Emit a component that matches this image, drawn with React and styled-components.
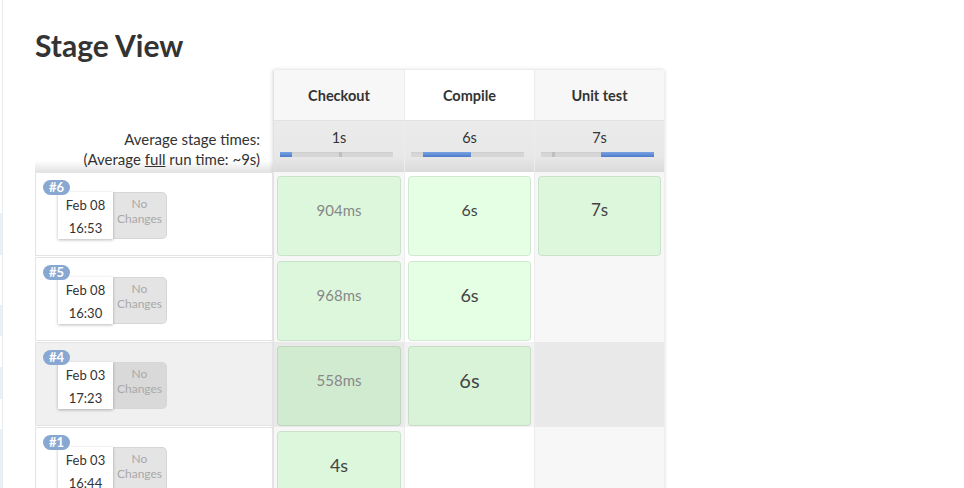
import React from 'react';
import styled, { createGlobalStyle } from 'styled-components';

const GlobalStyle = createGlobalStyle`
  html, body { margin: 0; padding: 0; background: #fff; }
  body { font-family: Lato, "Open Sans", "DejaVu Sans", sans-serif; color: #333; }
  * { box-sizing: border-box; }
`;

const Page = styled.div`
  display: flex;
  height: 488px;
  overflow: hidden;
`;

const Sidebar = styled.div`
  flex: 0 0 3px;
  border-right: 1px solid #e7edf0;
  display: flex;
  flex-direction: column;
`;

const SideBlock = styled.div`
  height: ${p => p.h}px;
  margin-top: ${p => p.mt}px;
  background: #eaf0f3;
`;

const Main = styled.div`
  flex: 1;
  padding-left: 32px;
`;

const Title = styled.h2`
  margin: 27px 0 0;
  font-size: 30px;
  line-height: 36px;
  font-weight: 700;
  color: #333;
`;

const StageView = styled.div`
  display: flex;
  margin-top: 7px;
`;

const LeftCol = styled.div`
  flex: 0 0 238px;
  display: flex;
  flex-direction: column;
`;

const HeaderSpacer = styled.div`
  height: 51px;
`;

const AvgLabel = styled.div`
  height: 51px;
  padding: 8px 13px 0 0;
  text-align: right;
  font-size: 15px;
  line-height: 20px;
  color: #333;
  background: linear-gradient(to bottom, #fff 0%, #fff 78%, #e3e3e3 100%);
`;

const Under = styled.span`
  text-decoration: underline;
`;

const RunCell = styled.div`
  position: relative;
  height: 84px;
  margin-bottom: 1px;
  border: 1px solid #e4e4e4;
  background: ${p => (p.$hover ? '#f0f0f0' : '#fff')};
  padding: 19px 0 0 22px;
  display: flex;
  align-items: flex-start;
`;

const Badge = styled.div`
  position: absolute;
  top: 7px;
  left: 7px;
  z-index: 2;
  width: 27px;
  height: 15px;
  border-radius: 8px;
  background: #88a8d2;
  color: #fff;
  font-size: 13px;
  font-weight: 700;
  line-height: 15px;
  text-align: center;
`;

const DateBox = styled.div`
  width: 55px;
  height: 47px;
  padding-top: 2px;
  background: #fff;
  box-shadow: 0 1px 3px rgba(0, 0, 0, 0.28);
  font-size: 13px;
  line-height: 23px;
  text-align: center;
  color: #333;
  position: relative;
  z-index: 1;
`;

const NoChanges = styled.div`
  width: 54px;
  height: 47px;
  background: ${p => (p.$hover ? '#d9d9d9' : '#e4e4e4')};
  border: 1px solid #d6d6d6;
  border-left: none;
  border-radius: 0 5px 5px 0;
  color: #a9a9a9;
  font-size: 12px;
  line-height: 15px;
  padding-top: 3px;
  text-align: center;
`;

const StagesPanel = styled.div`
  display: flex;
  border-left: 1px solid #e2e2e2;
  box-shadow: 0 0 4px rgba(0, 0, 0, 0.18);
  align-self: flex-start;
`;

const StageColumn = styled.div`
  flex: 0 0 130px;
  display: flex;
  flex-direction: column;
  background: ${p => (p.$alt ? '#f7f7f7' : '#fff')};
  & + & { border-left: 1px solid #ececec; }
`;

const StageHeader = styled.div`
  height: 51px;
  display: flex;
  align-items: center;
  justify-content: center;
  font-size: 14.5px;
  font-weight: 700;
  color: #333;
  border-bottom: 1px solid #e2e2e2;
`;

const AvgCell = styled.div`
  height: 51px;
  padding-top: 7px;
  background: linear-gradient(to bottom, #ebebeb 0%, #e8e8e8 70%, #dadada 100%);
  font-size: 14.5px;
  line-height: 20px;
  text-align: center;
  color: #333;
`;

const Track = styled.div`
  position: relative;
  width: 113px;
  height: 5px;
  margin: 4px 0 0 6px;
  background: #d6d6d6;
  border-top: 1px solid #cfcfcf;
`;

const Fill = styled.div`
  position: absolute;
  top: -1px;
  height: 5px;
  background: linear-gradient(to bottom, #7aa3e3, #4d7ccb);
`;

const Tick = styled.div`
  position: absolute;
  top: -1px;
  width: 3px;
  height: 5px;
  background: #bfbfbf;
`;

const StageCell = styled.div`
  height: 85px;
  padding: 4px 3px 1px 3px;
  background: ${p => (p.$hover ? (p.$alt ? '#e9e9e9' : '#f2f2f2') : 'transparent')};
`;

const SuccessBox = styled.div`
  height: 100%;
  border: 1px solid rgba(0, 0, 0, 0.09);
  border-radius: 4px;
  background: rgba(0, 255, 0, 0.1);
  padding-top: 21px;
  text-align: center;
  line-height: 24px;
  font-size: ${p => p.$size}px;
  color: ${p => (p.$ms ? '#888' : '#444')};
`;

const stages = [
  { name: 'Checkout', avg: '1s', alt: true, fill: [0, 12], tick: 59 },
  { name: 'Compile', avg: '6s', alt: false, fill: [12, 48], tick: null },
  { name: 'Unit test', avg: '7s', alt: true, fill: [60, 53], tick: 11 },
];

const runs = [
  { id: '#6', date: 'Feb 08', time: '16:53', cells: [{ t: '904ms', s: 15, ms: true }, { t: '6s', s: 16 }, { t: '7s', s: 17 }] },
  { id: '#5', date: 'Feb 08', time: '16:30', cells: [{ t: '968ms', s: 15, ms: true }, { t: '6s', s: 18 }, null] },
  { id: '#4', date: 'Feb 03', time: '17:23', hover: true, cells: [{ t: '558ms', s: 15, ms: true }, { t: '6s', s: 20 }, null] },
  { id: '#1', date: 'Feb 03', time: '16:44', cells: [{ t: '4s', s: 18 }, null, null] },
];

export default function App() {
  return (
    <>
      <GlobalStyle />
      <Page>
        <Sidebar>
          <SideBlock mt={213} h={42} />
          <SideBlock mt={50} h={32} />
          <SideBlock mt={31} h={32} />
          <SideBlock mt={30} h={60} />
        </Sidebar>
        <Main>
          <Title>Stage View</Title>
          <StageView>
            <LeftCol>
              <HeaderSpacer />
              <AvgLabel>
                Average stage times:
                <br />
                (Average <Under>full</Under> run time: ~9s)
              </AvgLabel>
              {runs.map(r => (
                <RunCell key={r.id} $hover={r.hover}>
                  <Badge>{r.id}</Badge>
                  <DateBox>
                    {r.date}
                    <br />
                    {r.time}
                  </DateBox>
                  <NoChanges $hover={r.hover}>
                    No
                    <br />
                    Changes
                  </NoChanges>
                </RunCell>
              ))}
            </LeftCol>
            <StagesPanel>
              {stages.map((s, i) => (
                <StageColumn key={s.name} $alt={s.alt}>
                  <StageHeader>{s.name}</StageHeader>
                  <AvgCell>
                    {s.avg}
                    <Track>
                      {s.tick !== null && <Tick style={{ left: s.tick }} />}
                      <Fill style={{ left: s.fill[0], width: s.fill[1] }} />
                    </Track>
                  </AvgCell>
                  {runs.map(r => {
                    const c = r.cells[i];
                    return (
                      <StageCell key={r.id} $hover={r.hover} $alt={s.alt}>
                        {c && (
                          <SuccessBox $size={c.s} $ms={c.ms}>
                            {c.t}
                          </SuccessBox>
                        )}
                      </StageCell>
                    );
                  })}
                </StageColumn>
              ))}
            </StagesPanel>
          </StageView>
        </Main>
      </Page>
    </>
  );
}
